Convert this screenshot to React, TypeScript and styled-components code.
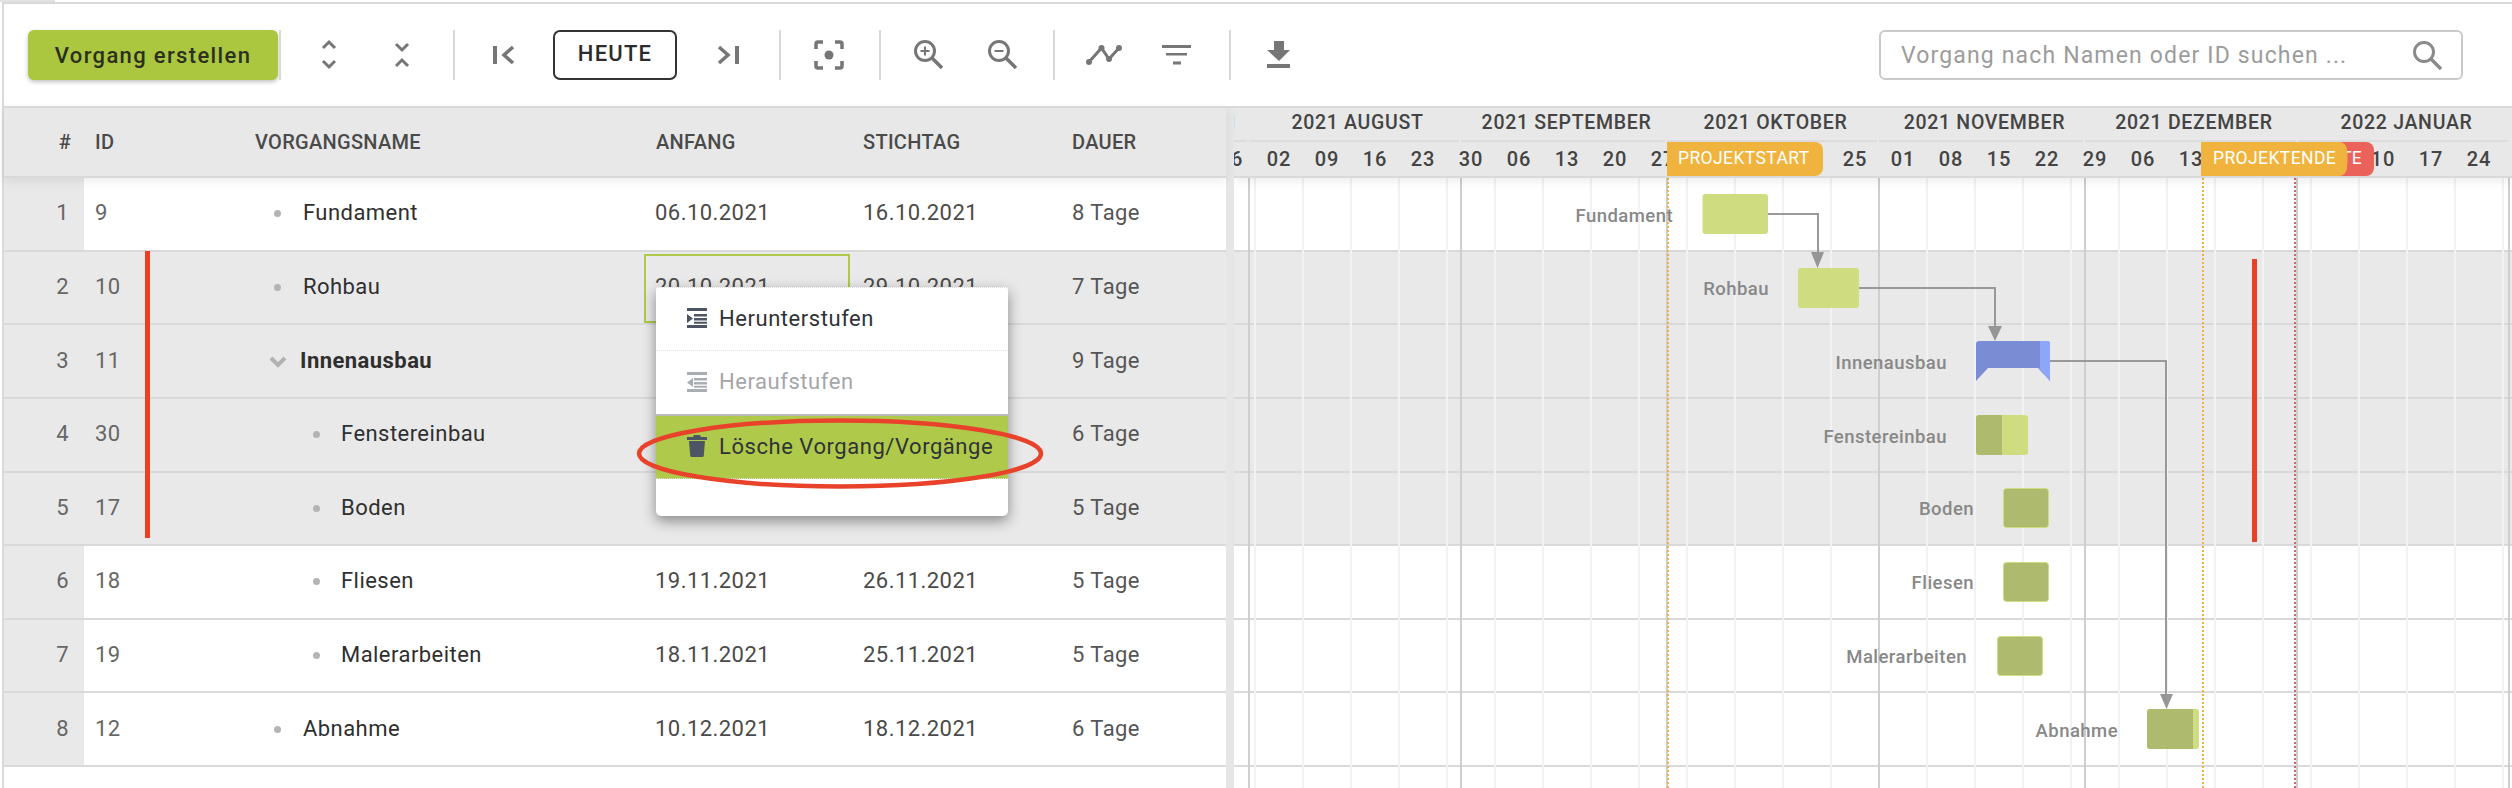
import React from "react";
import styled, { createGlobalStyle } from "styled-components";

const Global = createGlobalStyle`
  html, body { margin: 0; padding: 0; background: #fff; }
  body { font-family: Roboto, "Liberation Sans", sans-serif; color: #333; }
  * { box-sizing: border-box; }
`;

const ROW_H = 73.625;
const LINE = "#d9d9d9";

const Page = styled.div`
  width: 2512px; height: 788px; overflow: hidden; padding-top: 2px; padding-left: 2px; background: #fff; position: relative;
  &::before { content: ""; position: absolute; left: 0; top: 0; width: 55px; height: 2px; background: #e2e2e2; }
`;
const Frame = styled.div`
  height: 786px; border-top: 2px solid ${LINE}; border-left: 2px solid ${LINE};
  display: flex; flex-direction: column;
`;
const Toolbar = styled.div`
  height: 102px; flex: none; display: flex; align-items: center; padding: 0 49px 0 24px; background: #fff;
`;
const CreateButton = styled.button`
  width: 250px; height: 50px; border: 0; border-radius: 6px; background: #abc73f; color: #2c3020;
  font: 500 22px Roboto, sans-serif; letter-spacing: 1.35px; padding: 0;
  box-shadow: 0 2px 4px rgba(0,0,0,.25); flex: none;
`;
const Sep = styled.div<{ $l?: number }>`
  width: 2px; height: 50px; background: #d8d8d8; flex: none; margin-left: ${p => p.$l ?? 0}px;
`;
const Group = styled.div<{ $l: number; $r: number; $gap: number }>`
  display: flex; align-items: center; flex: none;
  padding: 0 ${p => p.$r}px 0 ${p => p.$l}px; gap: ${p => p.$gap}px;
`;
const IconBtn = styled.div`
  width: 44px; height: 44px; flex: none; color: #767676;
  svg { display: block; width: 44px; height: 44px; }
`;
const TodayButton = styled.button`
  width: 124px; height: 50px; border: 2px solid #333; border-radius: 7px; background: #fff; color: #2c2c2c;
  font: 500 22px Roboto, sans-serif; letter-spacing: 1.2px; padding: 0 0 4px; flex: none; margin-right: 2px;
`;
const SearchBox = styled.div`
  margin-left: auto; width: 584px; height: 50px; border: 2px solid #c9c9c9; border-radius: 6px;
  display: flex; align-items: center; padding: 0 18px 0 20px; flex: none;
  svg { width: 32px; height: 32px; flex: none; color: #8a8a8a; }
`;
const SearchInput = styled.input`
  flex: 1; min-width: 0; border: 0; outline: 0; background: transparent; padding: 0;
  font: 400 23px Roboto, sans-serif; letter-spacing: 1.15px;
  &::placeholder { color: #9c9c9c; opacity: 1; }
`;

const Main = styled.div`
  flex: 1; display: flex; min-height: 0; position: relative;
`;
const LeftPane = styled.div`
  width: 1222px; flex: none; position: relative; display: flex; flex-direction: column;
`;
const Splitter = styled.div`
  width: 8px; flex: none; background: #e5e6e8; border-top: 2px solid ${LINE};
`;
const RightPane = styled.div`
  flex: 1; min-width: 0; position: relative; overflow: hidden; display: flex; flex-direction: column;
`;
const TableHead = styled.div`
  height: 72px; flex: none; background: #e8e8e8; border-top: 2px solid ${LINE}; border-bottom: 2px solid ${LINE};
  display: grid; grid-template-columns: 80px 171px 389px 206px 212px 1fr; align-items: center;
  position: relative; z-index: 2; box-shadow: 0 4px 10px rgba(0,0,0,.07);
  font: 500 20px Roboto, sans-serif; letter-spacing: .3px; color: #4a4a4a;
`;
const HeadNum = styled.div` text-align: right; padding-right: 13px; `;
const HeadCell = styled.div<{ $l: number }>` padding-left: ${p => p.$l}px; `;

const Rows = styled.div` position: relative; flex: 1; `;
const Row = styled.div<{ $shaded: boolean }>`
  height: ${ROW_H}px; border-bottom: 2px solid ${LINE};
  background: ${p => (p.$shaded ? "#e9e9e9" : "#fff")};
  display: grid; grid-template-columns: 80px 171px 389px 206px 212px 1fr; align-items: center;
  font: 400 22px Roboto, sans-serif; letter-spacing: .45px;
`;
const NumCell = styled.div`
  align-self: stretch; background: #e9e9e9; display: flex; align-items: center; justify-content: flex-end;
  padding-right: 15px; color: #666; padding-bottom: 2px;
`;
const IdCell = styled.div` padding-left: 11px; color: #666; padding-bottom: 2px; `;
const NameCell = styled.div<{ $level: number }>`
  display: flex; align-items: center; color: #2f2f2f; padding-bottom: 2px;
  padding-left: ${p => (p.$level === 1 ? 58 : 19)}px;
`;
const Bullet = styled.span<{ $gap: number }>`
  width: 7px; height: 7px; border-radius: 50%; background: #b4b4b4; flex: none; margin-right: ${p => p.$gap}px; margin-top: 2px;
`;
const Caret = styled.svg`
  width: 18px; height: 12px; flex: none; margin: 4px 13px 0 -5px; color: #b2b2b2;
`;
const GroupName = styled.span` font-weight: 700; `;
const DateCell = styled.div<{ $l: number; $selected?: boolean }>`
  padding-left: ${p => p.$l}px; color: #4a4a4a; align-self: stretch; display: flex; align-items: center; padding-bottom: 2px;
  ${p => (p.$selected ? "box-shadow: inset 0 0 0 2px #afca4b; margin-top: 2px; padding-bottom: 4px;" : "")}
`;
const DurCell = styled.div` padding-left: 10px; color: #555; padding-bottom: 2px; `;
const Marker = styled.div`
  position: absolute; left: 141px; top: 73px; width: 5px; height: 287px; background: #ea4125;
`;

const Menu = styled.div`
  position: absolute; left: 652px; top: 109px; width: 352px; height: 229px; background: #fff;
  border-radius: 2px 2px 5px 5px; box-shadow: 0 5px 14px rgba(0,0,0,.42); z-index: 3;
  border-top: 1px dotted #ddd; display: flex; flex-direction: column;
`;
const MenuItem = styled.div<{ $state?: "disabled" | "active" }>`
  height: 63px; flex: none; display: flex; align-items: center; padding: 0 0 2px 31px; gap: 12px;
  font: 400 22px Roboto, sans-serif; letter-spacing: .55px;
  color: ${p => (p.$state === "disabled" ? "#a4a6a9" : "#2f3338")};
  border-bottom: 1px dotted #e4e4e4;
  ${p => p.$state === "disabled" ? "border-bottom: 2px solid #bcbcbc; height: 65px;" : ""}
  ${p => p.$state === "active" ? "background: #afca4b; border-bottom: 1px dotted #ddd;" : ""}
  svg { width: 20px; height: 22px; flex: none; color: ${p => (p.$state === "disabled" ? "#a9adb4" : "#4d5564")}; }
`;
const Callout = styled.svg`
  position: absolute; left: 626px; top: 236px; width: 420px; height: 80px; z-index: 4; overflow: visible;
`;

const TimeHead = styled.div`
  height: 72px; flex: none; background: #e8e8e8; border-top: 2px solid ${LINE}; border-bottom: 2px solid ${LINE};
  position: relative; z-index: 2; box-shadow: 0 4px 10px rgba(0,0,0,.07);
  color: #444; font: 500 19.500px Roboto, sans-serif; letter-spacing: .7px; overflow: hidden;
`;
const MonthStrip = styled.div`
  display: flex; height: 34px; margin-left: -197px; width: 1600px;
`;
const Month = styled.div<{ $w: number; $end?: boolean }>`
  width: ${p => p.$w}px; flex: none; margin-right: 2px; border-bottom: 2px solid #dcdcdc;
  display: flex; align-items: center; white-space: nowrap; padding-bottom: 3px;
  justify-content: ${p => (p.$end ? "flex-end" : "center")};
  ${p => (p.$end ? "padding-right: 11px;" : "padding-left: 7px;")}
`;
const WeekStrip = styled.div`
  display: flex; height: 34px; margin-left: -27px; width: 1400px;
  font-size: 20px; letter-spacing: 1px;
`;
const Week = styled.div`
  width: 48px; flex: none; display: flex; align-items: center; justify-content: center; padding-bottom: 1px;
`;
const Flag = styled.div<{ $x: number; $w: number; $c: string; $pad: number; $z: number }>`
  position: absolute; top: 34px; height: 34px; left: ${p => p.$x - 1234}px; width: ${p => p.$w}px;
  background: ${p => p.$c}; color: #fff; border-radius: 0 8px 8px 0; z-index: ${p => p.$z};
  font: 400 17.500px Roboto, sans-serif; letter-spacing: .4px; display: flex; align-items: center;
  padding: 0 0 3px ${p => p.$pad}px; white-space: nowrap; overflow: hidden;
`;
const ChartBody = styled.div` position: relative; flex: 1; `;
const ChartSvg = styled.svg`
  position: absolute; left: 0; top: 0; width: 1278px; height: 610px; display: block;
`;
const BarLabel = styled.div<{ $right: number; $y: number }>`
  position: absolute; left: ${p => p.$right - 1234 - 300}px; width: 300px; text-align: right;
  top: ${p => p.$y - 178 - 13}px; height: 26px; white-space: nowrap;
  font: 500 18.500px/26px Roboto, sans-serif; letter-spacing: .45px; color: #888;
`;

type Task = { n: number; id: number; name: string; start: string; end: string; dur: string; level: number; group?: boolean; shaded: boolean };
const tasks: Task[] = [
  { n: 1, id: 9, name: "Fundament", start: "06.10.2021", end: "16.10.2021", dur: "8 Tage", level: 0, shaded: false },
  { n: 2, id: 10, name: "Rohbau", start: "20.10.2021", end: "29.10.2021", dur: "7 Tage", level: 0, shaded: true },
  { n: 3, id: 11, name: "Innenausbau", start: "", end: "", dur: "9 Tage", level: 0, group: true, shaded: true },
  { n: 4, id: 30, name: "Fenstereinbau", start: "", end: "", dur: "6 Tage", level: 1, shaded: true },
  { n: 5, id: 17, name: "Boden", start: "", end: "", dur: "5 Tage", level: 1, shaded: true },
  { n: 6, id: 18, name: "Fliesen", start: "19.11.2021", end: "26.11.2021", dur: "5 Tage", level: 1, shaded: false },
  { n: 7, id: 19, name: "Malerarbeiten", start: "18.11.2021", end: "25.11.2021", dur: "5 Tage", level: 1, shaded: false },
  { n: 8, id: 12, name: "Abnahme", start: "10.12.2021", end: "18.12.2021", dur: "6 Tage", level: 0, shaded: false },
];
const months = [
  { t: "2021 JULI", w: 210, end: true }, { t: "2021 AUGUST", w: 210 }, { t: "2021 SEPTEMBER", w: 204 },
  { t: "2021 OKTOBER", w: 210 }, { t: "2021 NOVEMBER", w: 204 }, { t: "2021 DEZEMBER", w: 211 }, { t: "2022 JANUAR", w: 210 },
];
const weeks = ["26","02","09","16","23","30","06","13","20","27","04","11","18","25","01","08","15","22","29","06","13","20","27","03","10","17","24"];
const weekLines = Array.from({ length: 27 }, (_, i) => 1255 + 48 * i);
const monthLines = [1249, 1461, 1667, 1879, 2085, 2297, 2509];
const labels = [
  { t: "Fundament", r: 1673, y: 216 }, { t: "Rohbau", r: 1769, y: 289 }, { t: "Innenausbau", r: 1947, y: 363 },
  { t: "Fenstereinbau", r: 1947, y: 437 }, { t: "Boden", r: 1974, y: 509 }, { t: "Fliesen", r: 1974, y: 583 },
  { t: "Malerarbeiten", r: 1967, y: 657 }, { t: "Abnahme", r: 2118, y: 731 },
];

const Sv = ({ children }: { children: React.ReactNode }) => (
  <svg viewBox="0 0 44 44" fill="none" stroke="currentColor" strokeWidth={3}>{children}</svg>
);

export default function App() {
  return (
    <Page>
      <Global />
      <Frame>
        <Toolbar>
          <CreateButton>Vorgang erstellen</CreateButton>
          <Sep $l={1} />
          <Group $l={26} $r={29} $gap={29}>
            <IconBtn><Sv><path d="M16 15l6-6 6 6M16 28l6 6 6-6" /></Sv></IconBtn>
            <IconBtn><Sv><path d="M16 11l6 6 6-6M16 33l6-6 6 6" /></Sv></IconBtn>
          </Group>
          <Sep />
          <Group $l={26} $r={28} $gap={28}>
            <IconBtn><Sv><path d="M14 13v18" strokeWidth={4} /><path d="M32 14l-9 8 9 8" strokeWidth={3.5} /></Sv></IconBtn>
            <TodayButton>HEUTE</TodayButton>
            <IconBtn><Sv><path d="M30 13v18" strokeWidth={4} /><path d="M12 14l9 8-9 8" strokeWidth={3.5} /></Sv></IconBtn>
          </Group>
          <Sep />
          <Group $l={26} $r={28} $gap={0}>
            <IconBtn><Sv><path d="M9 16v-5a2 2 0 0 1 2-2h5M28 9h5a2 2 0 0 1 2 2v5M35 28v5a2 2 0 0 1-2 2h-5M16 35h-5a2 2 0 0 1-2-2v-5" strokeWidth={3.5} /><circle cx="22" cy="22" r="4.5" fill="currentColor" stroke="none" /></Sv></IconBtn>
          </Group>
          <Sep />
          <Group $l={26} $r={28} $gap={30}>
            <IconBtn><Sv><circle cx="18" cy="18" r="9.5" /><path d="M25 25l10 10" strokeWidth={3.5} /><path d="M18 13.5v9M13.5 18h9" strokeWidth={2} /></Sv></IconBtn>
            <IconBtn><Sv><circle cx="18" cy="18" r="9.5" /><path d="M25 25l10 10" strokeWidth={3.5} /><path d="M13.5 18h9" strokeWidth={2} /></Sv></IconBtn>
          </Group>
          <Sep />
          <Group $l={27} $r={31} $gap={28}>
            <IconBtn><Sv><path d="M7 29L19.5 15 27 26l10-11" /><g fill="currentColor" stroke="none"><circle cx="7" cy="29" r="3" /><circle cx="19.5" cy="15" r="3" /><circle cx="27" cy="26" r="3" /><circle cx="37" cy="15" r="3" /></g></Sv></IconBtn>
            <IconBtn><Sv><g fill="currentColor" stroke="none"><rect x="8" y="12" width="29" height="3" /><rect x="12" y="20" width="21" height="2.5" /><rect x="19" y="28.5" width="8" height="3" /></g></Sv></IconBtn>
          </Group>
          <Sep />
          <Group $l={25} $r={0} $gap={0}>
            <IconBtn><Sv><g fill="currentColor" stroke="none"><path d="M18 8h10v9h6L23 28 11 17h7z" /><rect x="11" y="31" width="23" height="4" /></g></Sv></IconBtn>
          </Group>
          <SearchBox>
            <SearchInput readOnly placeholder="Vorgang nach Namen oder ID suchen ..." />
            <svg viewBox="0 0 32 32" fill="none" stroke="currentColor" strokeWidth={3}><circle cx="13" cy="13" r="9.5" /><path d="M20 20l10 10" strokeWidth={3.5} /></svg>
          </SearchBox>
        </Toolbar>
        <Main>
          <LeftPane>
            <TableHead>
              <HeadNum>#</HeadNum>
              <HeadCell $l={11}>ID</HeadCell>
              <HeadCell $l={0}>VORGANGSNAME</HeadCell>
              <HeadCell $l={12}>ANFANG</HeadCell>
              <HeadCell $l={13}>STICHTAG</HeadCell>
              <HeadCell $l={10}>DAUER</HeadCell>
            </TableHead>
            <Rows>
              {tasks.map(t => (
                <Row key={t.n} $shaded={t.shaded}>
                  <NumCell>{t.n}</NumCell>
                  <IdCell>{t.id}</IdCell>
                  <NameCell $level={t.level}>
                    {t.group ? (
                      <Caret viewBox="0 0 18 12" fill="none" stroke="currentColor" strokeWidth={4}><path d="M2 2l7 7 7-7" /></Caret>
                    ) : <Bullet $gap={t.level === 1 ? 21 : 22} />}
                    {t.group ? <GroupName>{t.name}</GroupName> : t.name}
                  </NameCell>
                  <DateCell $l={11} $selected={t.n === 2}>{t.start}</DateCell>
                  <DateCell $l={13}>{t.end}</DateCell>
                  <DurCell>{t.dur}</DurCell>
                </Row>
              ))}
              <Marker />
              <Menu>
                <MenuItem>
                  <svg viewBox="0 0 20 22" fill="currentColor"><path d="M0 1h20v3H0zM7 7h13v2.500H7zM7 11h13v2.500H7zM0 18h20v3H0zM0 7l6 4.500L0 16zM7 14.800h13v2H7z" /></svg>
                  Herunterstufen
                </MenuItem>
                <MenuItem $state="disabled">
                  <svg viewBox="0 0 20 22" fill="currentColor"><path d="M0 1h20v3H0zM7 7h13v2.500H7zM7 11h13v2.500H7zM0 18h20v3H0zM6 7l-6 4.500L6 16zM7 14.800h13v2H7z" /></svg>
                  Heraufstufen
                </MenuItem>
                <MenuItem $state="active">
                  <svg viewBox="0 0 20 22" fill="currentColor"><path d="M7 0h6l1 2h6v3H0V2h6zM2 6h16l-1.200 14.500a1.500 1.500 0 0 1-1.500 1.500H4.700a1.500 1.500 0 0 1-1.500-1.500z" /></svg>
                  Lösche Vorgang/Vorgänge
                </MenuItem>
              </Menu>
              <Callout viewBox="630 414 420 80">
                <ellipse cx="840" cy="453.500" rx="201" ry="33" fill="none" stroke="#e8432a" strokeWidth="4.500" />
              </Callout>
            </Rows>
          </LeftPane>
          <Splitter />
          <RightPane>
            <TimeHead>
              <MonthStrip>
                {months.map(m => <Month key={m.t} $w={m.w} $end={m.end}>{m.t}</Month>)}
              </MonthStrip>
              <WeekStrip>
                {weeks.map((w, i) => <Week key={i}>{w}</Week>)}
              </WeekStrip>
              <Flag $x={2295} $w={79} $c="#ea6259" $pad={11} $z={1}>HEUTE</Flag>
              <Flag $x={1667} $w={156} $c="#f0b43e" $pad={11} $z={2}>PROJEKTSTART</Flag>
              <Flag $x={2201} $w={146} $c="#f0b43e" $pad={12} $z={2}>PROJEKTENDE</Flag>
            </TimeHead>
            <ChartBody>
              {tasks.map(t => <Row key={t.n} $shaded={t.shaded} />)}
              <ChartSvg viewBox="1234 178 1278 610">
                {weekLines.map(x => <line key={x} x1={x} x2={x} y1={178} y2={788} stroke="#f2f2f2" strokeWidth="2" />)}
                {monthLines.map(x => <line key={x} x1={x} x2={x} y1={178} y2={788} stroke="#cecece" strokeWidth="2" />)}
                <line x1={1668} x2={1668} y1={178} y2={788} stroke="#f0b43e" strokeWidth="2" strokeDasharray="2 2" />
                <line x1={2203} x2={2203} y1={178} y2={788} stroke="#f0b43e" strokeWidth="2" strokeDasharray="2 2" />
                <line x1={2295} x2={2295} y1={178} y2={788} stroke="#e0606a" strokeWidth="2" strokeDasharray="2 2" />
                <rect x={2252} y={259} width={5} height={283} fill="#ea4125" />

                <g fill="none" stroke="#999" strokeWidth="2">
                  <path d="M1768 214H1818V256" />
                  <path d="M1859 288H1995V330" />
                  <path d="M2050 361H2166V698" />
                </g>
                <g fill="#969696">
                  <path d="M1811 252h13l-6.500 16z" />
                  <path d="M1988 326h14l-7 15z" />
                  <path d="M2160 694h13l-6.500 15z" />
                </g>

                <rect x={1702.500} y={194} width={65.500} height={40} rx={3} fill="#cfdd80" />
                <rect x={1798} y={268} width={61} height={40} rx={3} fill="#cfdd80" />

                <path d="M1976 344a3 3 0 0 1 3-3h68a3 3 0 0 1 3 3v37l-12-13h-50l-12 13z" fill="#7a8dd4" />
                <path d="M2040 341h7a3 3 0 0 1 3 3v37l-11-13h1z" fill="#8da6f8" />

                <rect x={1976} y={415} width={52} height={40} rx={3} fill="#cfdd80" />
                <path d="M1979 415h23v40h-23a3 3 0 0 1-3-3v-34a3 3 0 0 1 3-3z" fill="#aeba6e" />
                <rect x={2003.500} y={488.500} width={45} height={39} rx={3} fill="#aeba6e" stroke="#cfdd80" />
                <rect x={2003.500} y={562.500} width={45} height={39} rx={3} fill="#aeba6e" stroke="#cfdd80" />
                <rect x={1997.500} y={636.500} width={45} height={39} rx={3} fill="#aeba6e" stroke="#cfdd80" />
                <rect x={2147} y={709} width={52} height={40} rx={3} fill="#cfdd80" />
                <path d="M2150 709h43v40h-43a3 3 0 0 1-3-3v-34a3 3 0 0 1 3-3z" fill="#aeba6e" />
              </ChartSvg>
              {labels.map(l => <BarLabel key={l.t} $right={l.r} $y={l.y}>{l.t}</BarLabel>)}
            </ChartBody>
          </RightPane>
        </Main>
      </Frame>
    </Page>
  );
}
